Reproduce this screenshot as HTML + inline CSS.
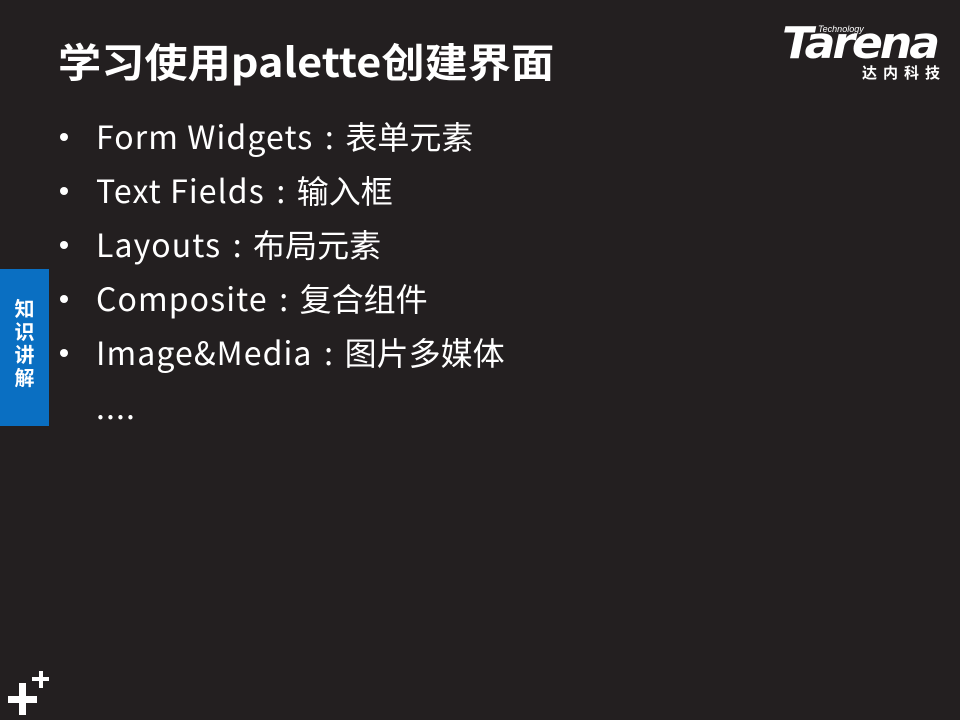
<!DOCTYPE html>
<html><head><meta charset="utf-8"><style>
html,body{margin:0;padding:0}
body{width:960px;height:720px;background:#231f20;position:relative;overflow:hidden;font-family:"Liberation Sans","Noto Sans CJK SC",sans-serif;color:#fff}
.title{position:absolute;left:58px;top:38px;font-family:"Noto Sans CJK SC",sans-serif;font-size:40px;font-weight:bold;line-height:1.1;white-space:nowrap;transform:scaleX(1.08);transform-origin:left}
.item{position:absolute;left:96px;font-family:"Noto Sans CJK SC",sans-serif;font-size:32px;line-height:36px;white-space:nowrap;top:0}
.item .l{letter-spacing:1.1px}
.item .c{display:inline-block;width:32px;text-align:center}
.dot{position:absolute;left:-36px;top:15px;width:8px;height:8px;border-radius:50%;background:#fff}
.tab{position:absolute;left:0;top:269px;width:49px;height:157px;background:#0a6fc2}
.tab div{position:absolute;left:0;width:49px;text-align:center;top:27px;font-family:"Noto Sans CJK SC",sans-serif;font-size:20px;font-weight:bold;line-height:23px}
.logo{position:absolute;left:782px;top:20px;width:170px;height:70px}
.tar{position:absolute;left:0;top:0;font-family:"DejaVu Sans",sans-serif;font-weight:bold;font-style:italic;font-size:44px;line-height:48px;letter-spacing:-3px;transform:scaleX(1.04);transform-origin:left}
.tech{position:absolute;left:36px;top:4px;font-size:9px;font-style:italic}
.cn{position:absolute;left:80px;top:42px;font-family:"Noto Sans CJK SC",sans-serif;font-size:15px;font-weight:bold;letter-spacing:6px}
.p{position:absolute;background:#fff}
</style></head><body>
<div class="title">学习使用palette创建界面</div>
<div class="item" style="top:118px"><span class="dot"></span><span class="l">Form Widgets</span><span class="c">:</span>表单元素</div>
<div class="item" style="top:172px"><span class="dot"></span><span class="l">Text Fields</span><span class="c">:</span>输入框</div>
<div class="item" style="top:226px"><span class="dot"></span><span class="l">Layouts</span><span class="c">:</span>布局元素</div>
<div class="item" style="top:280px"><span class="dot"></span><span class="l">Composite</span><span class="c">:</span>复合组件</div>
<div class="item" style="top:334px"><span class="dot"></span><span class="l">Image&amp;Media</span><span class="c">:</span>图片多媒体</div>
<div class="item" style="top:388px"><span class="l">....</span></div>
<div class="tab"><div>知<br>识<br>讲<br>解</div></div>
<div class="logo"><div class="tar">Tarena</div><div class="tech">Technology</div><div class="cn">达内科技</div></div>
<div class="p" style="left:8px;top:696px;width:29px;height:7px"></div>
<div class="p" style="left:19px;top:683px;width:7px;height:32px"></div>
<div class="p" style="left:32px;top:677px;width:17px;height:4px"></div>
<div class="p" style="left:39px;top:671px;width:4px;height:17px"></div>
</body></html>
